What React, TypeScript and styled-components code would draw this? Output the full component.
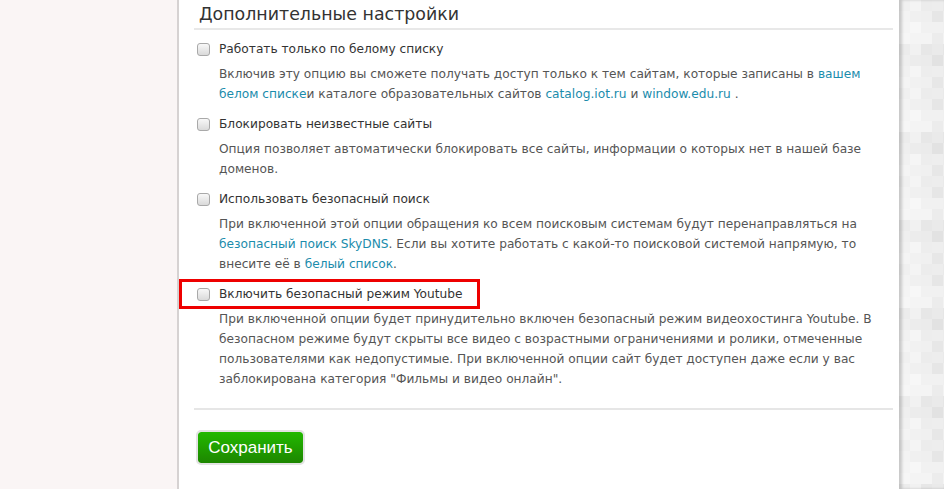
import styled, { createGlobalStyle } from 'styled-components'

const GlobalStyle = createGlobalStyle`
    html, body {
        margin: 0;
        padding: 0;
    }
    body {
        font-family: 'DejaVu Sans', 'Liberation Sans', sans-serif;
        background: #fff;
    }
`

const getOptions = () => [
    {
        id: 'whitelist',
        title: 'Работать только по белому списку',
        text: (
            <>
                Включив эту опцию вы сможете получать доступ только к тем сайтам, которые записаны в{' '}
                <Link href="#">вашем</Link>
                <br />
                <Link href="#">белом списке</Link>и каталоге образовательных сайтов{' '}
                <Link href="#">catalog.iot.ru</Link> и <Link href="#">window.edu.ru</Link> .
            </>
        ),
    },
    {
        id: 'unknown',
        title: 'Блокировать неизвестные сайты',
        text: (
            <>
                Опция позволяет автоматически блокировать все сайты, информации о которых нет в нашей базе
                <br />
                доменов.
            </>
        ),
    },
    {
        id: 'safesearch',
        title: 'Использовать безопасный поиск',
        text: (
            <>
                При включенной этой опции обращения ко всем поисковым системам будут перенаправляться на
                <br />
                <Link href="#">безопасный поиск SkyDNS</Link>. Если вы хотите работать с какой-то поисковой системой напрямую, то
                <br />
                внесите её в <Link href="#">белый список</Link>.
            </>
        ),
    },
    {
        id: 'youtube',
        title: 'Включить безопасный режим Youtube',
        marked: true,
        text: (
            <>
                При включенной опции будет принудительно включен безопасный режим видеохостинга Youtube. В
                <br />
                безопасном режиме будут скрыты все видео с возрастными ограничениями и ролики, отмеченные
                <br />
                пользователями как недопустимые. При включенной опции сайт будет доступен даже если у вас
                <br />
                заблокирована категория "Фильмы и видео онлайн".
            </>
        ),
    },
]

const App = () => {
    const options = getOptions()
    return (
        <Page>
            <GlobalStyle />
            <SideArea />
            <Panel>
                <Heading>Дополнительные настройки</Heading>
                <OptionList>
                    {options.map((option) => (
                        <Option key={option.id}>
                            <OptionRow>
                                {option.marked && <Highlight />}
                                <CheckBox type="checkbox" id={option.id} />
                                <OptionLabel htmlFor={option.id}>{option.title}</OptionLabel>
                            </OptionRow>
                            <OptionText>{option.text}</OptionText>
                        </Option>
                    ))}
                </OptionList>
                <Footer>
                    <SaveButton>Сохранить</SaveButton>
                </Footer>
            </Panel>
            <Backdrop />
        </Page>
    )
}

export default App

const Page = styled.div`
    display: flex;
    height: 489px;
    overflow: hidden;
`

const SideArea = styled.div`
    width: 177px;
    flex-shrink: 0;
    background: #faf5f5;
    border-right: 2px solid #d6d2d2;
`

const Panel = styled.div`
    width: 699px;
    flex-shrink: 0;
    background: #fff;
    padding: 0 6px 0 15px;
`

const Heading = styled.h2`
    margin: 0;
    padding-left: 5px;
    height: 28px;
    line-height: 28px;
    font-size: 17.4px;
    font-weight: normal;
    color: #333;
    border-bottom: 2px solid #e8e8e8;
`

const OptionList = styled.div`
    padding: 9px 0 0 3px;
`

const Option = styled.div`
    margin-bottom: 10px;
`

const OptionRow = styled.div`
    position: relative;
    display: flex;
    align-items: center;
    height: 20px;
    gap: 9px;
`

const Highlight = styled.div`
    position: absolute;
    left: -18px;
    top: -5px;
    width: 295px;
    height: 24px;
    border: 3px solid #ee0000;
    pointer-events: none;
`

const CheckBox = styled.input`
    appearance: none;
    margin: 0;
    width: 13px;
    height: 13px;
    border: 1px solid #a9a9a9;
    border-radius: 3px;
    background: linear-gradient(#f8f8f8, #dadada);
    box-sizing: border-box;
`

const OptionLabel = styled.label`
    font-size: 12.2px;
    color: #333;
`

const OptionText = styled.p`
    margin: 5px 0 0 22px;
    font-size: 12.2px;
    line-height: 20px;
    color: #555;
    white-space: nowrap;
`

const Link = styled.a`
    color: #1b8cac;
    text-decoration: none;
`

const Footer = styled.div`
    margin-top: 19px;
    border-top: 2px solid #e6e6e6;
    padding-top: 20px;
`

const SaveButton = styled.button`
    margin-left: 2px;
    width: 109px;
    height: 35px;
    border: 2px solid #e3e3e3;
    border-radius: 5px;
    background: linear-gradient(#22b900, #1d8600) padding-box;
    color: #fff;
    font-family: 'Liberation Sans Narrow', 'Liberation Sans', sans-serif;
    font-size: 17px;
    cursor: pointer;
`

const Backdrop = styled.div`
    flex: 1;
    background-color: #ececec;
    background-image: conic-gradient(
            rgba(255, 255, 255, 0.28) 25%,
            transparent 0 50%,
            rgba(255, 255, 255, 0.18) 0 75%,
            transparent 0
        ),
        conic-gradient(rgba(0, 0, 0, 0.025) 25%, transparent 0 50%, rgba(255, 255, 255, 0.25) 0 75%, transparent 0),
        conic-gradient(transparent 25%, rgba(0, 0, 0, 0.02) 0 50%, transparent 0 75%, rgba(255, 255, 255, 0.2) 0);
    background-size: 22px 22px, 66px 44px, 44px 88px;
    box-shadow: inset 3px 0 3px rgba(0, 0, 0, 0.18);
`
